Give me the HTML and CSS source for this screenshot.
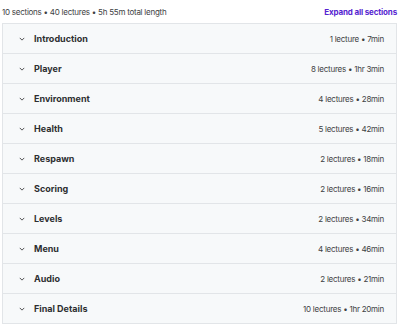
FILE: index.html
```html
<!DOCTYPE html>
<html>
<head>
<meta charset="utf-8">
<link rel="stylesheet" href="styles.css">
</head>
<body>
<div class="page">
  <div class="summary">
    <span class="meta">10 sections • 40 lectures • 5h 55m total length</span>
    <button class="expand">Expand all sections</button>
  </div>
  <div class="sections">
    <div class="row"><span class="chev"><svg viewBox="0 0 8 5" width="6" height="4"><path d="M1 1l3 3 3-3" fill="none" stroke="#3e4143" stroke-width="1.2"/></svg></span><span class="title">Introduction</span><span class="info">1 lecture • 7min</span></div>
    <div class="row"><span class="chev"><svg viewBox="0 0 8 5" width="6" height="4"><path d="M1 1l3 3 3-3" fill="none" stroke="#3e4143" stroke-width="1.2"/></svg></span><span class="title">Player</span><span class="info">8 lectures • 1hr 3min</span></div>
    <div class="row"><span class="chev"><svg viewBox="0 0 8 5" width="6" height="4"><path d="M1 1l3 3 3-3" fill="none" stroke="#3e4143" stroke-width="1.2"/></svg></span><span class="title">Environment</span><span class="info">4 lectures • 28min</span></div>
    <div class="row"><span class="chev"><svg viewBox="0 0 8 5" width="6" height="4"><path d="M1 1l3 3 3-3" fill="none" stroke="#3e4143" stroke-width="1.2"/></svg></span><span class="title">Health</span><span class="info">5 lectures • 42min</span></div>
    <div class="row"><span class="chev"><svg viewBox="0 0 8 5" width="6" height="4"><path d="M1 1l3 3 3-3" fill="none" stroke="#3e4143" stroke-width="1.2"/></svg></span><span class="title">Respawn</span><span class="info">2 lectures • 18min</span></div>
    <div class="row"><span class="chev"><svg viewBox="0 0 8 5" width="6" height="4"><path d="M1 1l3 3 3-3" fill="none" stroke="#3e4143" stroke-width="1.2"/></svg></span><span class="title">Scoring</span><span class="info">2 lectures • 16min</span></div>
    <div class="row"><span class="chev"><svg viewBox="0 0 8 5" width="6" height="4"><path d="M1 1l3 3 3-3" fill="none" stroke="#3e4143" stroke-width="1.2"/></svg></span><span class="title">Levels</span><span class="info">2 lectures • 34min</span></div>
    <div class="row"><span class="chev"><svg viewBox="0 0 8 5" width="6" height="4"><path d="M1 1l3 3 3-3" fill="none" stroke="#3e4143" stroke-width="1.2"/></svg></span><span class="title">Menu</span><span class="info">4 lectures • 46min</span></div>
    <div class="row"><span class="chev"><svg viewBox="0 0 8 5" width="6" height="4"><path d="M1 1l3 3 3-3" fill="none" stroke="#3e4143" stroke-width="1.2"/></svg></span><span class="title">Audio</span><span class="info">2 lectures • 21min</span></div>
    <div class="row"><span class="chev"><svg viewBox="0 0 8 5" width="6" height="4"><path d="M1 1l3 3 3-3" fill="none" stroke="#3e4143" stroke-width="1.2"/></svg></span><span class="title">Final Details</span><span class="info">10 lectures • 1hr 20min</span></div>
  </div>
</div>
</body>
</html>
```
FILE: styles.css
```css
* { box-sizing: border-box; }
body {
  margin: 0;
  background: #fff;
  font-family: Inter, "Noto Sans", sans-serif;
  color: #2d2f31;
}
.page {
  padding: 0 3px 0 2px;
}
.summary {
  height: 23px;
  display: flex;
  align-items: center;
  justify-content: space-between;
  padding-top: 1px;
}
.meta {
  font-size: 8px;
  letter-spacing: -0.25px;
  color: #3e4143;
}
.expand {
  border: 0;
  background: none;
  padding: 0;
  font-family: inherit;
  font-size: 8px;
  font-weight: 700;
  color: #5624d0;
  letter-spacing: -0.15px;
}
.sections {
  border: 1px solid #e2e5e8;
  border-bottom: 0;
}
.row {
  height: 30px;
  display: flex;
  align-items: center;
  background: #f7f9fa;
  border-bottom: 1px solid #e2e5e8;
  padding: 0 12px 0 16px;
}
.chev {
  display: flex;
  width: 15px;
}
.title {
  font-size: 9px;
  font-weight: 700;
  flex: 1;
}
.info {
  font-size: 8px;
  letter-spacing: -0.25px;
  color: #3e4143;
}
```
